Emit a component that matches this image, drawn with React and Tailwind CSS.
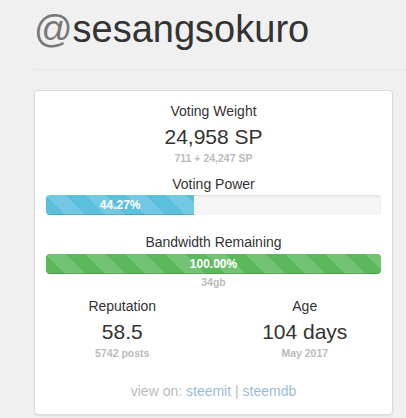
import React from "react";

const stripe =
  "bg-[linear-gradient(45deg,rgba(255,255,255,.15)_25%,transparent_25%,transparent_50%,rgba(255,255,255,.15)_50%,rgba(255,255,255,.15)_75%,transparent_75%,transparent)] bg-[length:40px_40px]";

function Bar({ pct, color }) {
  return (
    <div className="h-5 w-full overflow-hidden rounded-[4px] bg-[#f5f5f5] shadow-[inset_0_1px_2px_rgba(0,0,0,0.1)]">
      <div
        className={`${color} ${stripe} flex h-full items-center justify-center text-[12px] font-bold leading-5 text-white shadow-[inset_0_-1px_0_rgba(0,0,0,0.15)]`}
        style={{ width: `${pct}%` }}
      >
        {pct.toFixed(2)}%
      </div>
    </div>
  );
}

export default function App() {
  return (
    <div className="min-h-[418px] w-[406px] overflow-hidden bg-[#f0f0f0] pl-[34px] font-['Liberation_Sans',Arial,sans-serif] text-[#333]">
      <h1 className="mt-[7px] text-[38px] font-normal leading-[44px] whitespace-nowrap">
        <span className="text-[#777]">@</span>sesangsokuro
      </h1>
      <div className="mt-[18px] h-px bg-[#e7e7e7]" />
      <div className="mt-[20px] w-[359px] rounded-[4px] border border-[#dcdcdc] bg-white px-[11px] pt-[10px] pb-[13px] text-center shadow-[0_1px_2px_rgba(0,0,0,0.08)]">
        <div className="text-[14px] leading-5">Voting Weight</div>
        <div className="mt-[3px] text-[21px] leading-[26px]">24,958 SP</div>
        <div className="text-[10.5px] font-bold leading-4 text-[#bbb]">711 + 24,247 SP</div>
        <div className="mt-2 text-[14px] leading-5">Voting Power</div>
        <div className="mt-px">
          <Bar pct={44.27} color="bg-[#5bc0de]" />
        </div>
        <div className="mt-[17px] text-[14px] leading-5">Bandwidth Remaining</div>
        <div className="mt-0.5">
          <Bar pct={100} color="bg-[#5cb85c]" />
        </div>
        <div className="text-[10.5px] font-bold leading-4 text-[#bbb]">34gb</div>
        <div className="-mx-[15px] mt-1.5 grid grid-cols-2">
          <div>
            <div className="text-[14px] leading-5">Reputation</div>
            <div className="mt-[3px] text-[21px] leading-[26px]">58.5</div>
            <div className="text-[10.5px] font-bold leading-4 text-[#bbb]">5742 posts</div>
          </div>
          <div>
            <div className="text-[14px] leading-5">Age</div>
            <div className="mt-[3px] text-[21px] leading-[26px]">104 days</div>
            <div className="text-[10.5px] font-bold leading-4 text-[#bbb]">May 2017</div>
          </div>
        </div>
        <div className="mt-5 text-[14px] leading-5 opacity-50">
          <span className="text-[#777]">view on: </span>
          <a className="text-[#337ab7]">steemit</a>
          <span className="text-[#777]"> | </span>
          <a className="text-[#337ab7]">steemdb</a>
        </div>
      </div>
    </div>
  );
}
